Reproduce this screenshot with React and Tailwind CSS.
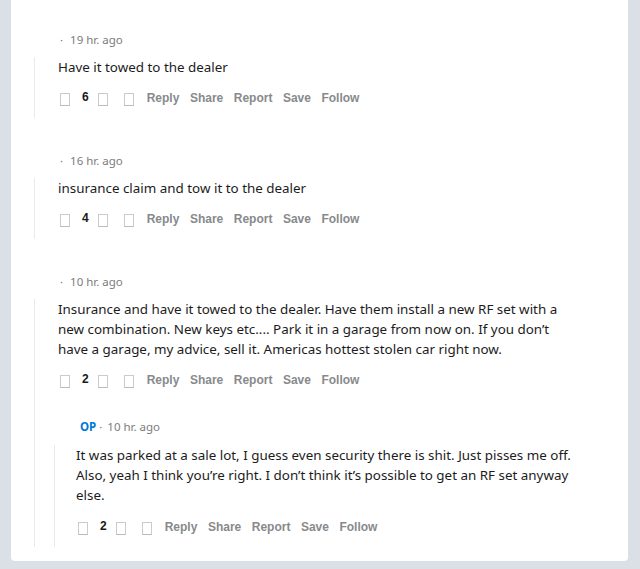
import React from "react";

const comments = [
  {
    id: 1,
    time: "19 hr. ago",
    body: "Have it towed to the dealer",
    score: 6,
  },
  {
    id: 2,
    time: "16 hr. ago",
    body: "insurance claim and tow it to the dealer",
    score: 4,
  },
  {
    id: 3,
    time: "10 hr. ago",
    body: "Insurance and have it towed to the dealer. Have them install a new RF set with a new combination. New keys etc.... Park it in a garage from now on. If you don\u2019t have a garage, my advice, sell it. Americas hottest stolen car right now.",
    score: 2,
    replies: [
      {
        id: 4,
        op: true,
        time: "10 hr. ago",
        body: "It was parked at a sale lot, I guess even security there is shit. Just pisses me off. Also, yeah I think you\u2019re right. I don\u2019t think it\u2019s possible to get an RF set anyway else.",
        score: 2,
      },
    ],
  },
];

const Box = ({ className = "" }) => (
  <span className={`inline-block w-[10px] h-[13px] border border-[#c9cbcd] border-b-[#b9bbbd] mt-[2px] ${className}`} />
);

const Actions = ({ score, className = "" }) => (
  <div className={`flex items-center h-6 text-xs font-bold font-['Liberation_Sans',Arial,sans-serif] ${className}`}>
    <Box />
    <span className="ml-[12px] text-[#1a1a1b] relative -top-[1px]">{score}</span>
    <Box className="ml-[9px]" />
    <Box className="ml-[16px]" />
    <div className="ml-[13px] flex gap-[10.5px] text-[#878a8c]">
      <span>Reply</span>
      <span>Share</span>
      <span>Report</span>
      <span>Save</span>
      <span>Follow</span>
    </div>
  </div>
);

const Reply = ({ c }) => (
  <div className="pl-[19px] mt-[27px]">
    <div className="h-4 leading-4 text-[11.5px] pl-[26px] flex items-center text-[#7c7c7c]">
      {c.op && <span className="font-bold text-[#0079d3]">OP</span>}
      <span className="ml-[3px] mr-[5px]">·</span>
      <span>{c.time}</span>
    </div>
    <div className="mt-[10px] border-l border-[#e8eaec] pb-2">
      <p className="pl-[21px] text-[13.4px] leading-5 text-[#1c1c1c]">{c.body}</p>
      <Actions score={c.score} className="mt-[10px] pl-[23px]" />
    </div>
  </div>
);

const Comment = ({ c, first }) => (
  <div className={`pl-[23px] ${first ? "" : "mt-[35px]"}`}>
    <div className="h-4 leading-4 text-[11.5px] pl-[26px] flex items-center text-[#7c7c7c]">
      <span className="mr-[7px]">·</span>
      <span>{c.time}</span>
    </div>
    <div className={`mt-[9px] border-l border-[#e8eaec] ${c.replies ? "" : "pb-2"}`}>
      <p className="pl-[23px] text-[13.4px] leading-5 text-[#1c1c1c]">{c.body}</p>
      <Actions score={c.score} className="mt-[9px] pl-[25px]" />
      {c.replies && c.replies.map((r) => <Reply key={r.id} c={r} />)}
    </div>
  </div>
);

export default function App() {
  return (
    <div className="min-h-[569px] w-full bg-[#dae0e6] pl-[11px] pr-[12px] pb-[8px] font-['Noto_Sans',sans-serif]">
      <div className="bg-white rounded-b-[4px] pt-[32px] pb-[14px] pr-[50px]">
        {comments.map((c, i) => (
          <Comment key={c.id} c={c} first={i === 0} />
        ))}
      </div>
    </div>
  );
}
